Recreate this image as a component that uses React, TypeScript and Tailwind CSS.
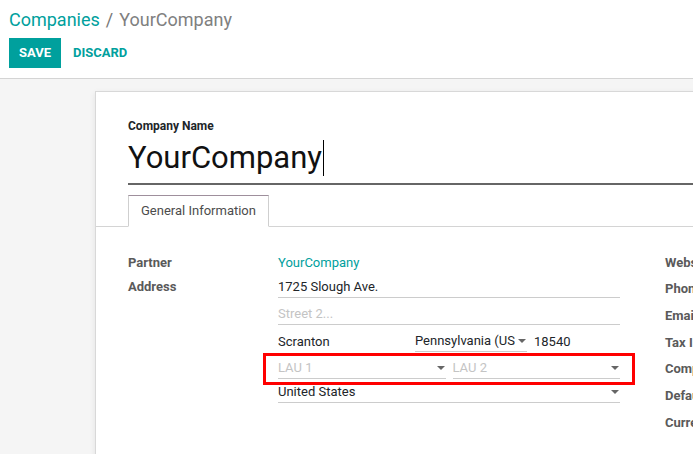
import React from 'react'

const font = { fontFamily: 'Roboto, "Noto Sans", sans-serif' }

function Caret() {
  return <span className="inline-block w-0 h-0 border-x-[4px] border-x-transparent border-t-[4px] border-t-[#666] shrink-0" />
}

function Field({ value, placeholder, caret, className = '' }: { value?: string; placeholder?: string; caret?: boolean; className?: string }) {
  return (
    <div className={`flex items-center h-[22px] border-b border-[#ccc] ${className}`}>
      <span className={`flex-1 min-w-0 overflow-hidden whitespace-nowrap ${value ? 'text-[#212529]' : 'text-[#c4c4c4]'}`}>
        {value ?? placeholder}
      </span>
      {caret && <span className="pr-[1px] pl-[3px] flex items-center"><Caret /></span>}
    </div>
  )
}

export default function App() {
  const rightLabels = ['Website', 'Phone', 'Email', 'Tax ID', 'Company Registry', 'Default Incoterm', 'Currency']
  return (
    <div className="w-[693px] h-[454px] overflow-hidden bg-[#f5f5f5] text-[13px]" style={font}>
      {/* control panel */}
      <div className="bg-white border-b border-[#d4d4d4] pt-[8px] pb-[10px] px-[9px]">
        <div className="text-[18px] leading-[24px] whitespace-nowrap">
          <span className="text-[#00A09D]">Companies</span>
          <span className="text-[#777] px-[6px]">/</span>
          <span className="text-[#808080]">YourCompany</span>
        </div>
        <div className="flex mt-[6px]">
          <button className="h-[30px] px-[10px] bg-[#00A09D] text-white font-bold text-[13px] leading-[30px]">SAVE</button>
          <button className="h-[30px] px-[12px] text-[#00A09D] font-bold text-[13px] leading-[30px]">DISCARD</button>
        </div>
      </div>

      {/* sheet */}
      <div className="ml-[95px] mt-[12px] w-[800px] h-[400px] bg-white border border-[#d8d8d8] shadow-[0_2px_6px_rgba(0,0,0,0.08)] px-[32px] pt-[26px]">
        <div className="text-[12px] leading-[16px] font-bold text-[#212529]">Company Name</div>
        <div className="mt-[4px] pb-[5px] border-b-2 border-[#666] flex items-center h-[47px]">
          <span className="text-[31px] leading-[40px] text-[#111] whitespace-nowrap">YourCompany</span>
          <span className="w-px h-[36px] bg-black ml-[1px]" />
        </div>

        <div className="-mx-[32px] px-[32px] mt-[10px] border-b border-[#d4d4d4] flex">
          <div className="-mb-px h-[32px] px-[12px] flex items-center bg-white border border-[#cfcfcf] border-t-[#9e8f9c] border-b-white text-[#4c4c4c]">
            General Information
          </div>
        </div>

        <div className="flex pt-[23px]">
          {/* left group */}
          <div className="w-[507px]">
            <div className="flex h-[26px] items-start">
              <div className="w-[150px] h-[25px] flex items-center font-bold text-[#5a5a5a]">Partner</div>
              <div className="h-[25px] flex items-center text-[#00A09D]">YourCompany</div>
            </div>
            <div className="flex">
              <div className="w-[150px] h-[22px] flex items-center font-bold text-[#5a5a5a]">Address</div>
              <div className="w-[342px] flex flex-col">
                <Field value="1725 Slough Ave." />
                <Field placeholder="Street 2..." className="mt-[5px]" />
                <div className="flex mt-[6px] gap-[7px]">
                  <Field value="Scranton" className="w-[130px] border-transparent" />
                  <Field value="Pennsylvania (US)" caret className="w-[112px] -translate-y-px" />
                  <Field value="18540" className="flex-1 border-transparent" />
                </div>
                <div className="relative flex mt-[4px] gap-[7px]">
                  <Field placeholder="LAU 1" caret className="flex-1" />
                  <Field placeholder="LAU 2" caret className="flex-1" />
                  <div className="absolute -left-[15px] -right-[15px] -top-[4px] -bottom-[6px] border-[3px] border-[#ff0000]" />
                </div>
                <Field value="United States" caret className="mt-[2px]" />
              </div>
            </div>
          </div>

          {/* right group */}
          <div className="ml-[30px] -mt-px flex flex-col">
            {rightLabels.map((l) => (
              <div key={l} className="h-[26.7px] flex items-center font-bold text-[#5a5a5a] whitespace-nowrap">{l}</div>
            ))}
          </div>
        </div>
      </div>
    </div>
  )
}
